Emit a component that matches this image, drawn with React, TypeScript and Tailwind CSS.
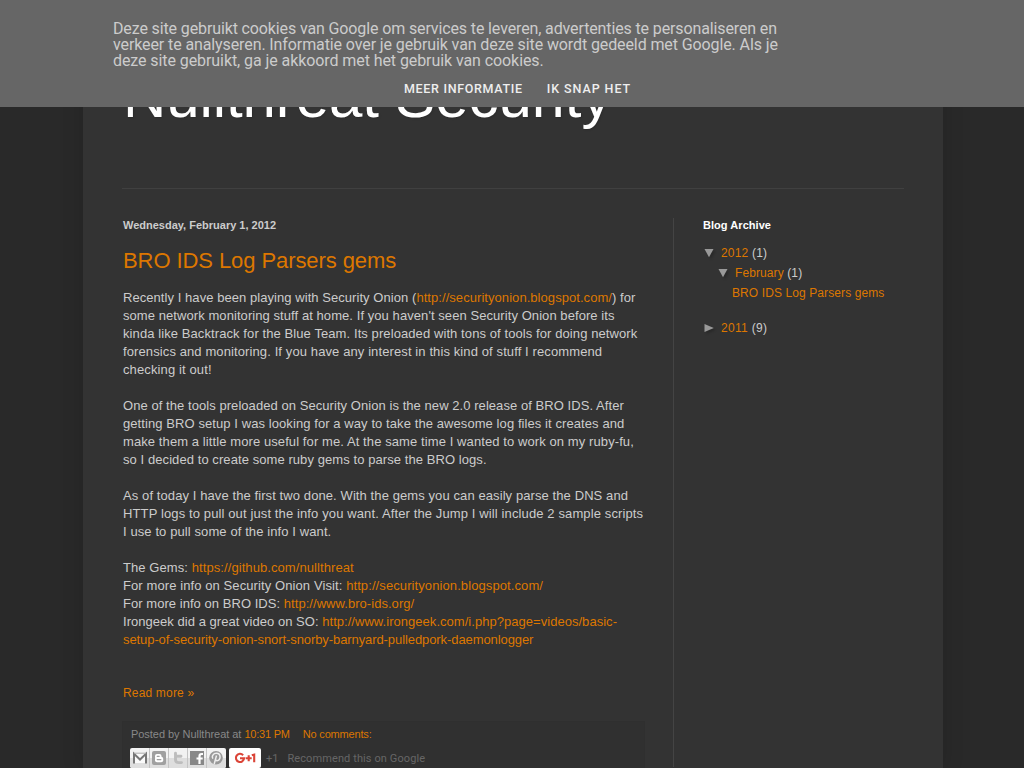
import type { ReactNode } from "react";

function Link({ children }: { children: ReactNode }) {
  return <a href="#" className="text-[#dd7700]">{children}</a>;
}

function CookieBar() {
  return (
    <div className="absolute inset-x-0 top-0 z-10 h-[107px] bg-[#666666] pt-[21px] font-['Roboto',sans-serif]">
      <div className="ml-[113px] whitespace-nowrap text-[16px] leading-4 text-[#cccccc]">
        <p className="tracking-[-0.126px]">Deze site gebruikt cookies van Google om services te leveren, advertenties te personaliseren en</p>
        <p className="tracking-[-0.105px]">verkeer te analyseren. Informatie over je gebruik van deze site wordt gedeeld met Google. Als je</p>
        <p className="tracking-[-0.08px]">deze site gebruikt, ga je akkoord met het gebruik van cookies.</p>
      </div>
      <div className="ml-[404px] mt-[12px] flex gap-[24px] whitespace-nowrap text-[12.5px] font-medium leading-4 text-[#eeeeee]">
        <a href="#" className="tracking-[0.68px]">MEER INFORMATIE</a>
        <a href="#" className="tracking-[0.92px]">IK SNAP HET</a>
      </div>
    </div>
  );
}

function ShareButtons() {
  const cell = "h-5 w-[19px] shrink-0";
  const bg = (
    <>
      <rect width="20" height="20" fill="#f2f2f2" />
      <rect y="10" width="20" height="10" fill="#dedede" />
      <path d="M0.5 0v20" stroke="#c4c4c4" />
    </>
  );
  return (
    <div className="flex h-5 w-24 overflow-hidden rounded-[2px]">
      <svg className={cell} viewBox="0 0 19 20">
        <rect width="19" height="20" fill="#f2f2f2" />
        <rect y="10" width="19" height="10" fill="#dedede" />
        <path d="M3.5 5h13v10h-13z" fill="#fafafa" />
        <path d="M4 15.5V5.8l6 5.7 6-5.7v9.7" fill="none" stroke="#777" strokeWidth="2" />
        <path d="M4 5.2h12" stroke="#aaa" strokeWidth="1" />
      </svg>
      <svg className={cell} viewBox="0 0 19 20">
        {bg}
        <rect x="3" y="3" width="14" height="14" rx="2" fill="#a0a0a0" />
        <rect x="6" y="6" width="6.5" height="5" rx="2" fill="#fff" />
        <rect x="6" y="8.8" width="8.2" height="5.4" rx="2" fill="#fff" />
        <path d="M8.2 8.3h2M8.2 11.6h3.7" stroke="#a0a0a0" strokeWidth="1.2" strokeLinecap="round" />
      </svg>
      <svg className={cell} viewBox="0 0 19 20">
        {bg}
        <path d="M7.5 5.2v6.4q0 3 3 3h3M7.5 8.2H13" fill="none" stroke="#bdbdbd" strokeWidth="2.9" strokeLinecap="round" />
      </svg>
      <svg className={cell} viewBox="0 0 19 20">
        {bg}
        <rect x="3" y="3" width="14" height="14" fill="#888" />
        <path d="M16 6h-1.3q-2.2 0-2.2 2.2V16M9.5 10.5h6.2" fill="none" stroke="#fff" strokeWidth="2.2" />
      </svg>
      <svg className="h-5 w-5 shrink-0" viewBox="0 0 20 20">
        {bg}
        <circle cx="10" cy="9.8" r="6.8" fill="#999" />
        <path d="M6.9 10.7C5.4 8.2 7.3 5.3 10.3 5.3c5.2 0 4.6 7.4.8 7.4-1.1 0-1.5-.8-1.5-.8M10.5 7.5 8.2 16" fill="none" stroke="#eee" strokeWidth="1.5" />
      </svg>
    </div>
  );
}

function PlusOne() {
  return (
    <div className="ml-[3px] flex h-5 w-8 items-center justify-center rounded-[2px] bg-white">
      <svg className="h-5 w-8" viewBox="0 0 32 20" fill="none" stroke="#db4437" strokeWidth="2.1">
        <path d="M14.1 7.2A4.1 4.1 0 1 0 15.1 10.2H11M16.7 10.2h6M19.7 7.2v6M22.8 7.3 25.2 6.6v7.6" />
      </svg>
    </div>
  );
}

function Triangle({ open }: { open?: boolean }) {
  return (
    <svg className="h-3 w-3 shrink-0 drop-shadow-[2px_2px_1px_rgba(0,0,0,0.2)]" viewBox="0 0 12 12" fill="#999999">
      <path d={open ? "M1.5 2h9L6 10.3z" : "M1.5 2v8L10.8 6z"} />
    </svg>
  );
}

function Archive() {
  return (
    <aside className="ml-[29px] text-[12px] leading-5 tracking-[0.1px] text-[#cccccc]">
      <h2 className="text-[11px] font-bold leading-[14px] tracking-[0.05px] text-white">Blog Archive</h2>
      <div className="mt-[11px] flex items-center gap-[6px]"><Triangle open /><span className="tracking-[0.2px]"><Link>2012</Link> (1)</span></div>
      <div className="ml-[14px] flex items-center gap-[6px]"><Triangle open /><span><Link>February</Link> (1)</span></div>
      <div className="ml-[29px] whitespace-nowrap"><Link>BRO IDS Log Parsers gems</Link></div>
      <div className="mt-[15px] flex items-center gap-[6px]"><Triangle /><span className="tracking-[0.3px]"><Link>2011</Link> (9)</span></div>
    </aside>
  );
}

function Post() {
  return (
    <article className="h-[549px] w-[551px] shrink-0 border-r border-[#444444]">
      <h2 className="text-[11px] font-bold leading-[14px] text-[#cccccc]">Wednesday, February 1, 2012</h2>
      <h3 className="mt-[16px] text-[22px] leading-[26px] tracking-[-0.08px]"><Link>BRO IDS Log Parsers gems</Link></h3>
      <div className="mt-[15px] flex flex-col gap-[18px] whitespace-nowrap text-[13px] leading-[18px] text-[#cccccc]">
        <div>
          <p className="tracking-[0.058px]">Recently I have been playing with Security Onion (<Link>http://securityonion.blogspot.com/</Link>) for</p>
          <p className="tracking-[0.07px]">some network monitoring stuff at home. If you haven't seen Security Onion before its</p>
          <p className="tracking-[0.089px]">kinda like Backtrack for the Blue Team. Its preloaded with tons of tools for doing network</p>
          <p className="tracking-[0.107px]">forensics and monitoring. If you have any interest in this kind of stuff I recommend</p>
          <p className="tracking-[0.12px]">checking it out!</p>
        </div>
        <div>
          <p className="tracking-[0.06px]">One of the tools preloaded on Security Onion is the new 2.0 release of BRO IDS. After</p>
          <p className="tracking-[0.082px]">getting BRO setup I was looking for a way to take the awesome log files it creates and</p>
          <p className="tracking-[0.092px]">make them a little more useful for me. At the same time I wanted to work on my ruby-fu,</p>
          <p className="tracking-[0.075px]">so I decided to create some ruby gems to parse the BRO logs.</p>
        </div>
        <div>
          <p className="tracking-[0.093px]">As of today I have the first two done. With the gems you can easily parse the DNS and</p>
          <p className="tracking-[0.12px]">HTTP logs to pull out just the info you want. After the Jump I will include 2 sample scripts</p>
          <p className="tracking-[0.1px]">I use to pull some of the info I want.</p>
        </div>
        <div>
          <p className="tracking-[0.08px]">The Gems: <Link>https://github.com/nullthreat</Link></p>
          <p className="tracking-[0.095px]">For more info on Security Onion Visit: <Link>http://securityonion.blogspot.com/</Link></p>
          <p className="tracking-[0.045px]">For more info on BRO IDS: <Link>http://www.bro-ids.org/</Link></p>
          <p className="tracking-[0.036px]">Irongeek did a great video on SO: <Link>http://www.irongeek.com/i.php?page=videos/basic-</Link></p>
          <p className="tracking-[-0.085px]"><Link>setup-of-security-onion-snort-snorby-barnyard-pulledpork-daemonlogger</Link></p>
        </div>
      </div>
      <div className="mt-[35px] text-[12px] leading-[18px] tracking-[0.17px]"><Link>Read more »</Link></div>
      <footer className="-ml-px mt-[19px] h-[47px] w-[523px] overflow-hidden border border-b-0 border-[#2f2f2f] bg-[#303030] pl-2 pt-[4px] text-[11px] text-[#888888]">
        <div className="flex gap-[13px] leading-[17px]">
          <span className="tracking-[-0.04px]">Posted by Nullthreat at <span className="tracking-[-0.22px]"><Link>10:31 PM</Link></span></span>
          <span className="tracking-[-0.17px]"><Link>No comments:</Link></span>
        </div>
        <div className="-ml-px mt-[5px] flex items-center">
          <ShareButtons />
          <PlusOne />
          <span className="ml-[5px] mt-[2px] whitespace-nowrap font-['Roboto',sans-serif] text-[11px] text-[#666666]">+1</span>
          <span className="ml-[9px] mt-[2px] whitespace-nowrap font-['Roboto',sans-serif] text-[11px] tracking-[0.1px] text-[#666666]">Recommend this on Google</span>
        </div>
      </footer>
    </article>
  );
}

export default function App() {
  return (
    <div className="relative h-screen w-full overflow-hidden bg-[#292929] font-['Liberation_Sans',Arial,sans-serif]">
      <CookieBar />
      <div className="ml-[83px] h-full w-[860px] bg-[#333333] px-10 shadow-[0_0_20px_rgba(0,0,0,0.15)]">
        <header className="-ml-px h-[189px] w-[782px] border-b border-[#404040] pt-[62px]">
          <h1 className="ml-px whitespace-nowrap text-[60px] leading-[69px] tracking-[-0.1px] text-white [text-shadow:1px_1px_2px_rgba(0,0,0,0.15)]">Nullthreat Security</h1>
        </header>
        <main className="flex pt-[29px]">
          <Post />
          <Archive />
        </main>
      </div>
    </div>
  );
}
